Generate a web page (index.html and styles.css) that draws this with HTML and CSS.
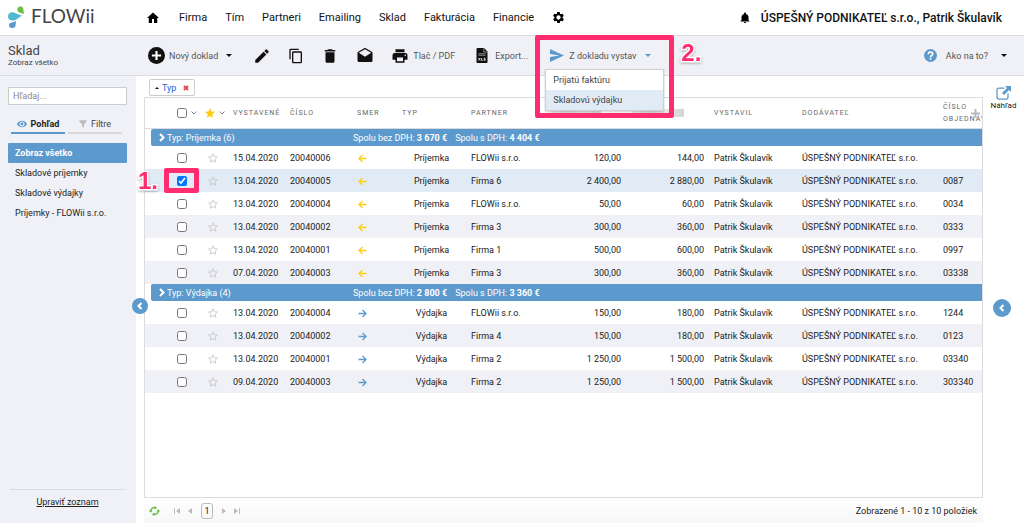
FILE: index.html
```html
<!DOCTYPE html>
<html lang="sk">
    <head>
        <meta charset="UTF-8">
        <meta name="viewport" content="width=device-width, initial-scale=1.0">
        <title>FLOWii - Sklad</title>
        <link rel="stylesheet" href="styles.css">
    </head>
    <body>
        <header class="topbar">
            <a href="#" class="logo">
                <svg width="18" height="23" viewBox="0 0 18 23">
                    <path fill="#6cbf45" d="M9.500 2.500C11 0 14 0 15 2c.7 1.500.5 4 1 6-2-1-4.500-1-6-2.500-.8-.8-1-2-.5-3z"/>
                    <path fill="#4db8cf" d="M0 10.500C0 7.500 2.500 6 5 6.300c3 .4 5.500 3.200 9.500 3.400-4 1.300-5.500 4.700-9.500 4.800-3 .1-5-1.500-5-4z"/>
                    <path fill="#5c9acd" d="M8 15c-.5 2 .2 4.500-1 6-1.300 1.500-4.500 1.500-5.700-.3C.2 18.500 1.500 17 3.500 16.500 5.200 16.100 6.500 16 8 15z"/>
                </svg>
                <span>FLOWii</span>
            </a>
            <nav class="menu">
                <a href="#" aria-label="Domov"><svg width="12" height="12" viewBox="0 0 24 24"><path d="M10 22v-8h4v8h6.500V12H24L12 1 0 12h3.500v10z"/></svg></a>
                <a href="#">Firma</a>
                <a href="#">Tím</a>
                <a href="#">Partneri</a>
                <a href="#">Emailing</a>
                <a href="#">Sklad</a>
                <a href="#">Fakturácia</a>
                <a href="#">Financie</a>
                <a href="#" aria-label="Nastavenia"><svg width="13" height="13" viewBox="0 0 24 24"><path d="M19.400 13c0-.3.100-.6.100-1s0-.7-.1-1l2.100-1.600c.2-.2.3-.4.1-.7l-2-3.400c-.1-.3-.4-.3-.6-.2l-2.500 1c-.5-.4-1.100-.7-1.700-1l-.4-2.600c0-.3-.2-.5-.5-.5h-4c-.2 0-.4.2-.5.400l-.4 2.700c-.6.200-1.100.6-1.700 1l-2.500-1c-.2-.1-.5 0-.6.200l-2 3.400c-.1.300-.1.500.1.700L4.600 11c0 .3-.1.600-.1 1s0 .7.100 1l-2.100 1.600c-.2.200-.3.400-.1.700l2 3.400c.1.300.4.300.6.200l2.500-1c.5.400 1.100.7 1.700 1l.4 2.600c0 .3.200.5.500.5h4c.3 0 .5-.2.500-.5l.4-2.600c.6-.3 1.100-.6 1.700-1l2.500 1c.2.100.5 0 .6-.2l2-3.400c.1-.3.100-.5-.1-.7zM12 16a4 4 0 1 1 0-8 4 4 0 0 1 0 8z"/></svg></a>
            </nav>
            <div class="account">
                <svg width="12" height="12" viewBox="0 0 24 24"><path d="M12 22c1.300 0 2.400-.9 2.400-2H9.600c0 1.100 1.100 2 2.400 2zm7-6v-5.500c0-3.200-2-5.700-5-6.500V3a2 2 0 0 0-4 0v1c-3 .8-5 3.300-5 6.500V16l-2 2.500V19h18v-.5z"/></svg>
                <strong>ÚSPEŠNÝ PODNIKATEĽ s.r.o., Patrik Škulavík</strong>
            </div>
        </header>

        <div class="toolbar">
            <div class="page-title">
                <h1>Sklad</h1>
                <p>Zobraz všetko</p>
            </div>
            <button type="button" class="tool tool-new">
                <svg width="17" height="17" viewBox="0 0 24 24"><circle cx="12" cy="12" r="12"/><path fill="#fff" d="M10.500 5.500h3v5h5v3h-5v5h-3v-5h-5v-3h5z"/></svg>
                Nový doklad <span class="caret"></span>
            </button>
            <button type="button" class="tool" aria-label="Upraviť"><svg width="18" height="18" viewBox="0 0 24 24"><path d="M3 17.200V21h3.800L17.800 9.900l-3.700-3.700zM20.700 7c.4-.4.4-1 0-1.400l-2.300-2.300c-.4-.4-1-.4-1.400 0l-1.900 1.900 3.700 3.700z"/></svg></button>
            <button type="button" class="tool" aria-label="Kopírovať"><svg width="16" height="16" viewBox="0 0 24 24"><path d="M16 1H4a2 2 0 0 0-2 2v14h2V3h12zm3 4H8a2 2 0 0 0-2 2v14c0 1.100.9 2 2 2h11a2 2 0 0 0 2-2V7a2 2 0 0 0-2-2zm0 16H8V7h11z"/></svg></button>
            <button type="button" class="tool" aria-label="Vymazať"><svg width="18" height="18" viewBox="0 0 24 24"><path d="M6 19c0 1.100.9 2 2 2h8a2 2 0 0 0 2-2V7H6zM19 4h-3.500l-1-1h-5l-1 1H5v2h14z"/></svg></button>
            <button type="button" class="tool" aria-label="Odoslať e-mail"><svg width="18" height="18" viewBox="0 0 24 24"><path d="M22 8c0-.7-.4-1.300-.9-1.700L12 1 2.900 6.300C2.400 6.700 2 7.300 2 8v10c0 1.100.9 2 2 2h16a2 2 0 0 0 2-2zm-10 5L3.700 7.800 12 3l8.300 4.800z"/></svg></button>
            <button type="button" class="tool">
                <svg width="18" height="18" viewBox="0 0 24 24"><path d="M19 8H5a3 3 0 0 0-3 3v6h4v4h12v-4h4v-6a3 3 0 0 0-3-3zm-3 11H8v-5h8zm3-7a1 1 0 1 1 0-2 1 1 0 0 1 0 2zM18 3H6v4h12z"/></svg>
                Tlač / PDF
            </button>
            <button type="button" class="tool tool-export">
                <svg width="12" height="15" viewBox="0 0 24 30"><path d="M3 0h13l7 7v21a2 2 0 0 1-2 2H3a2 2 0 0 1-2-2V2a2 2 0 0 1 2-2z"/><path fill="none" stroke="#fff" d="M15.500 1v7H23M5 11.500h14M5 14.500h14"/><path fill="none" stroke="#fff" stroke-width="1.500" d="m5 20 3.500 5M8.500 20 5 25M11 20v4.500h3M19 20.500h-3v2h2.500v2h-3"/></svg>
                Export...
            </button>
            <div class="dropdown">
                <button type="button" class="tool">
                    <svg width="14" height="13" viewBox="0 0 24 22"><path fill="#5c9acd" d="M0 22 24 11 0 0v8.500L16 11 0 13.500z"/></svg>
                    Z dokladu vystav <span class="caret caret-blue"></span>
                </button>
                <div class="dropdown-menu">
                    <a href="#">Prijatú faktúru</a>
                    <a href="#" class="active">Skladovú výdajku</a>
                </div>
                <div class="step-frame"></div>
                <span class="step">2.</span>
            </div>
            <button type="button" class="tool tool-help">
                <svg width="13" height="13" viewBox="0 0 24 24"><circle cx="12" cy="12" r="12" fill="#5c9acd"/><path fill="none" stroke="#fff" stroke-width="3" d="M8 9.500C8 7 9.500 5.500 12 5.500s4 1.500 4 3.500c0 3-4 3-4 6"/><circle cx="12" cy="18" r="1.800" fill="#fff"/></svg>
                <span>Ako na to?</span> <span class="caret"></span>
            </button>
        </div>

        <div class="page">
            <aside class="sidebar">
                <input type="text" class="search" placeholder="Hľadaj..." aria-label="Hľadaj">
                <div class="tabs">
                    <a href="#" class="tab active"><svg width="10" height="8" viewBox="0 0 24 18"><path fill="#5c9acd" fill-rule="evenodd" d="M12 1C6 1 2 5 0 9c2 4 6 8 12 8s10-4 12-8c-2-4-6-8-12-8zm0 14a6 6 0 1 1 0-12 6 6 0 0 1 0 12zm0-2.500a3.500 3.500 0 1 0 0-7 3.500 3.500 0 0 0 0 7z"/></svg>Pohľad</a>
                    <a href="#" class="tab"><svg width="8" height="8" viewBox="0 0 24 24"><path fill="#bbb" d="M1 1h22v3l-8 9v11l-6-5v-6L1 4z"/></svg>Filtre</a>
                </div>
                <nav class="views">
                    <a href="#" class="active">Zobraz všetko</a>
                    <a href="#">Skladové príjemky</a>
                    <a href="#">Skladové výdajky</a>
                    <a href="#">Príjemky - FLOWii s.r.o.</a>
                </nav>
                <div class="sidebar-bottom"><a href="#">Upraviť zoznam</a></div>
                <button type="button" class="toggle" aria-label="Skryť panel"><svg width="8" height="8" viewBox="0 0 8 8"><path d="M5.500 1 2.500 4l3 3"/></svg></button>
            </aside>

            <main class="content">
                <div class="grouping">
                    <span class="chip"><span class="sort"></span>Typ
                        <button type="button" aria-label="Zrušiť"><svg width="6" height="6" viewBox="0 0 6 6"><path stroke="#e8455a" stroke-width="2" d="m1 1 4 4M5 1 1 5"/></svg></button>
                    </span>
                </div>
                <div class="grid">
                    <table id="documents">
                        <colgroup>
                            <col class="c-check"><col class="c-star"><col class="c-date"><col class="c-number">
                            <col class="c-dir"><col class="c-type"><col><col class="c-sum">
                            <col class="c-total"><col class="c-user"><col class="c-supplier"><col class="c-order">
                        </colgroup>
                        <thead>
                            <tr>
                                <th class="check"><input type="checkbox" aria-label="Označiť všetko"><svg class="chevron" width="6" height="4" viewBox="0 0 6 4"><path d="m.5.500 2.500 2.500L5.500.500"/></svg></th>
                                <th class="fav"><svg width="10" height="10" viewBox="0 0 24 24"><path fill="#fdcc0d" d="m12 0 3.500 8.500 8.500.700-6.500 5.800 2 8.500-7.500-4.500-7.500 4.500 2-8.500L0 9.200l8.500-.7z"/></svg><svg class="chevron" width="6" height="4" viewBox="0 0 6 4"><path d="m.5.500 2.500 2.500L5.500.500"/></svg></th>
                                <th>Vystavené</th>
                                <th>Číslo</th>
                                <th>Smer</th>
                                <th>Typ</th>
                                <th>Partner</th>
                                <th><span class="masked"></span></th>
                                <th><span class="masked"></span></th>
                                <th>Vystavil</th>
                                <th>Dodávateľ</th>
                                <th class="order">Číslo objednávky<svg width="9" height="9" viewBox="0 0 9 9"><path stroke="#bbb" stroke-width="2" d="M4.500 0v9M0 4.500h9"/></svg></th>
                            </tr>
                        </thead>
                    </table>
                </div>
                <footer class="pager">
                    <button type="button" aria-label="Obnoviť"><svg width="11" height="10" viewBox="0 0 22 20"><path fill="none" stroke="#5cb531" stroke-width="2.500" d="M3.500 10c0-4.500 3.500-7 8-6.500M18.500 10c0 4.500-3.500 7-8 6.500"/><path fill="#5cb531" d="M11 0l5 3.500-5 3.500zM11 13l-5 3.500 5 3.500zM0 9h7l-3.500 4.500zM22 11h-7l3.500-4.500z"/></svg></button>
                    <button type="button" aria-label="Prvá"><svg width="6" height="6" viewBox="0 0 6 6"><path fill="#bbb" d="M0 0h1v6H0zM6 0v6L2 3z"/></svg></button>
                    <button type="button" aria-label="Späť"><svg width="4" height="6" viewBox="0 0 4 6"><path fill="#bbb" d="M4 0v6L0 3z"/></svg></button>
                    <button type="button" class="current">1</button>
                    <button type="button" aria-label="Ďalej"><svg width="4" height="6" viewBox="0 0 4 6"><path fill="#bbb" d="M0 0v6l4-3z"/></svg></button>
                    <button type="button" aria-label="Posledná"><svg width="6" height="6" viewBox="0 0 6 6"><path fill="#bbb" d="M5 0h1v6H5zM0 0v6l4-3z"/></svg></button>
                    <span class="count">Zobrazené 1 - 10 z 10 položiek</span>
                </footer>
            </main>

            <aside class="preview">
                <a href="#">
                    <svg width="15" height="14" viewBox="0 0 30 28"><path fill="none" stroke="#5c9acd" stroke-width="2.500" d="M17 4H6a4 4 0 0 0-4 4v14a4 4 0 0 0 4 4h14a4 4 0 0 0 4-4v-7"/><path fill="#5c9acd" d="M18 0h12v12l-4-4-10 10-4-4L22 4z"/></svg>
                    Náhľad
                </a>
                <button type="button" class="toggle" aria-label="Zobraziť náhľad"><svg width="8" height="8" viewBox="0 0 8 8"><path d="M5.500 1 2.500 4l3 3"/></svg></button>
            </aside>
        </div>

        <script>
            const groups = [
                {
                    name: 'Príjemka', net: '3 670 €', gross: '4 404 €', dir: 'in',
                    items: [
                        ['15.04.2020', '20040006', 'FLOWii s.r.o.', '120,00', '144,00', ''],
                        ['13.04.2020', '20040005', 'Firma 6', '2 400,00', '2 880,00', '0087', true],
                        ['13.04.2020', '20040004', 'FLOWii s.r.o.', '50,00', '60,00', '0034'],
                        ['13.04.2020', '20040002', 'Firma 3', '300,00', '360,00', '0333'],
                        ['13.04.2020', '20040001', 'Firma 1', '500,00', '600,00', '0997'],
                        ['07.04.2020', '20040003', 'Firma 3', '300,00', '360,00', '03338']
                    ]
                },
                {
                    name: 'Výdajka', net: '2 800 €', gross: '3 360 €', dir: 'out',
                    items: [
                        ['13.04.2020', '20040004', 'FLOWii s.r.o.', '150,00', '180,00', '1244'],
                        ['13.04.2020', '20040002', 'Firma 4', '150,00', '180,00', '0123'],
                        ['13.04.2020', '20040001', 'Firma 2', '1 250,00', '1 500,00', '03340'],
                        ['09.04.2020', '20040003', 'Firma 2', '1 250,00', '1 500,00', '303340']
                    ]
                }
            ];

            const star = '<svg width="10" height="10" viewBox="0 0 24 24"><path fill="none" stroke="#c4c4c4" stroke-width="2" d="m12 2 3 7 7.500.700-5.500 5 1.500 7.300-6.500-4-6.500 4L7 14.700l-5.500-5L9 9z"/></svg>';
            const arrows = {
                in: '<svg width="10" height="9" viewBox="0 0 10 9"><path fill="none" stroke="#fdd017" stroke-width="1.300" d="M9.500 4.500H2M5.500 1 2 4.500 5.500 8"/></svg>',
                out: '<svg width="10" height="9" viewBox="0 0 10 9"><path fill="none" stroke="#5c9acd" stroke-width="1.300" d="M1.500 4.500H9M5.500 1 9 4.500 5.500 8"/></svg>'
            };

            const table = document.getElementById('documents');
            groups.forEach(group => {
                let html = `<tr class="group"><td colspan="12"><div>
                    <svg width="6" height="9" viewBox="0 0 6 9"><path fill="none" stroke="#fff" stroke-width="2" d="m1 1 3.500 3.500L1 8"/></svg>
                    <span class="group-name">Typ: ${group.name} (${group.items.length})</span>
                    <span>Spolu bez DPH: <b>${group.net}</b></span>
                    <span>Spolu s DPH: <b>${group.gross}</b></span>
                </div></td></tr>`;
                group.items.forEach(([date, number, partner, sum, total, order, checked]) => {
                    html += `<tr class="${checked ? 'selected' : ''}">
                        <td class="check"><input type="checkbox" aria-label="${number}" ${checked ? 'checked' : ''}>${checked ? '<div class="step-frame"></div><span class="step">1.</span>' : ''}</td>
                        <td class="fav">${star}</td>
                        <td>${date}</td>
                        <td>${number}</td>
                        <td class="dir">${arrows[group.dir]}</td>
                        <td class="type">${group.name}</td>
                        <td>${partner}</td>
                        <td class="money">${sum}</td>
                        <td class="money">${total}</td>
                        <td>Patrik Škulavík</td>
                        <td>ÚSPEŠNÝ PODNIKATEĽ s.r.o.</td>
                        <td>${order}</td>
                    </tr>`;
                });
                table.createTBody().innerHTML = html;
            });
        </script>
    </body>
</html>
```
FILE: styles.css
```css
:root {
    --blue: #5c9acd;
    --light-blue: #e1ebf5;
    --panel: #f0f1f6;
    --line: #dcdce0;
    --pink: #ff2d6f;
}

* {
    box-sizing: border-box;
}

body {
    display: flex;
    flex-direction: column;
    min-height: 100vh;
    margin: 0;
    background: #fff;
    color: #222;
    font-family: Roboto, "Liberation Sans", sans-serif;
    font-size: 9px;
    line-height: 12px;
}

a {
    color: inherit;
    text-decoration: none;
}

button {
    padding: 0;
    border: none;
    background: none;
    color: inherit;
    font: inherit;
}

svg {
    display: block;
    flex: none;
}

/* top bar */
.topbar {
    display: flex;
    align-items: center;
    height: 36px;
    padding-right: 22px;
    border-bottom: 1px solid var(--line);
    color: #111;
}

.logo {
    display: flex;
    align-items: center;
    gap: 5px;
    width: 147px;
    padding-left: 8px;
    color: #444;
    font-family: Lato, sans-serif;
    font-size: 19px;
    line-height: 22px;
}

.logo span {
    margin-top: -4px;
}

.menu {
    display: flex;
    align-items: center;
    gap: 18px;
    font-size: 11px;
}

.menu a:first-child {
    margin-right: 2px;
}

.account {
    display: flex;
    align-items: center;
    gap: 10px;
    margin-left: auto;
    font-size: 12px;
}

.account strong {
    font-weight: 500;
}

/* toolbar */
.toolbar {
    display: flex;
    align-items: center;
    height: 40px;
    padding-right: 17px;
    border-bottom: 1px solid var(--line);
    background: var(--panel);
}

.page-title {
    width: 148px;
    padding-left: 8px;
    color: #444;
}

.page-title h1 {
    margin: 0;
    font-size: 13px;
    font-weight: normal;
    line-height: 14px;
}

.page-title p {
    margin: 0;
    font-size: 8px;
    line-height: 10px;
}

.tool {
    display: flex;
    align-items: center;
    gap: 4px;
    margin-right: 17px;
    color: #555;
    white-space: nowrap;
}

.tool svg {
    fill: #111;
}

.tool-new {
    margin-right: 21px;
}

.tool-export {
    gap: 7px;
    margin-left: 4px;
    margin-right: 22px;
}

.tool-help {
    gap: 9px;
    margin: 0 0 0 auto;
}

.caret {
    margin-left: 4px;
    border: 3px solid transparent;
    border-top-color: #111;
    border-bottom: none;
}

.caret-blue {
    border-top-color: var(--blue);
}

.dropdown {
    position: relative;
}

.dropdown .tool {
    margin: 0;
    gap: 5px;
}

.dropdown-menu {
    position: absolute;
    z-index: 2;
    top: 20px;
    left: -5px;
    width: 119px;
    border: 1px solid #d0d0d0;
    background: #fff;
    color: #444;
    box-shadow: 0 1px 2px rgba(0, 0, 0, .2);
}

.dropdown-menu a {
    display: block;
    padding: 4px 7px;
}

.dropdown-menu .active {
    background: var(--light-blue);
}

/* tutorial marks */
.step-frame {
    position: absolute;
    z-index: 3;
    border: 5px solid var(--pink);
    border-radius: 2px;
    pointer-events: none;
}

.step {
    position: absolute;
    z-index: 3;
    color: var(--pink);
    font: bold 24px/24px "Liberation Sans", sans-serif;
    -webkit-text-stroke: 3px #fff;
    paint-order: stroke fill;
    filter: drop-shadow(0 1px 1px rgba(0, 0, 0, .3));
}

.dropdown .step-frame {
    top: -14px;
    left: -15px;
    width: 139px;
    height: 83px;
}

.dropdown .step {
    top: -8px;
    left: 131px;
}

.check .step-frame {
    top: -1px;
    left: 19px;
    width: 35px;
    height: 25px;
}

.check .step {
    top: 0;
    left: -7px;
}

/* layout */
.page {
    display: flex;
    flex: 1;
}

.sidebar {
    position: relative;
    display: flex;
    flex-direction: column;
    width: 136px;
    padding: 11px 9px 15px 8px;
    background: var(--panel);
}

.search {
    width: 100%;
    height: 18px;
    padding: 0 4px;
    border: 1px solid #ccc;
    background: #fff;
    font: inherit;
}

.search::placeholder {
    color: #888;
}

.tabs {
    display: flex;
    gap: 3px;
    margin: 13px 5px 9px 3px;
}

.tab {
    display: flex;
    flex: 1;
    align-items: center;
    justify-content: center;
    gap: 4px;
    padding-bottom: 2px;
    border-bottom: 2px solid #d8d8d8;
    color: #444;
}

.tab.active {
    border-color: var(--blue);
    color: #222;
    font-weight: bold;
}

.views a {
    display: block;
    padding: 4px 7px;
    white-space: nowrap;
}

.views .active {
    border-radius: 1px;
    background: var(--blue);
    color: #fff;
    font-weight: bold;
}

.sidebar-bottom {
    margin: auto 2px 0;
    padding-top: 6px;
    border-top: 1px solid var(--line);
    text-align: center;
    text-decoration: underline;
}

.toggle {
    position: absolute;
    z-index: 2;
    top: 222px;
    display: grid;
    place-items: center;
    width: 16px;
    height: 16px;
    border-radius: 50%;
    background: var(--blue);
}

.toggle path {
    fill: none;
    stroke: #fff;
    stroke-width: 2;
}

.sidebar .toggle {
    right: -12px;
}

.content {
    display: flex;
    flex: 1;
    flex-direction: column;
    min-width: 0;
    padding-left: 8px;
}

.grouping {
    padding: 3px 5px 1px;
    border-bottom: 1px solid var(--line);
}

.chip {
    display: inline-flex;
    align-items: center;
    height: 17px;
    padding: 0 5px;
    border: 1px solid #ccc;
    border-radius: 2px;
    color: #1a62d6;
    vertical-align: top;
}

.chip button {
    margin-left: 7px;
}

.sort {
    margin-right: 3px;
    border: 2px solid transparent;
    border-top: none;
    border-bottom-color: #111;
}

/* grid */
.grid {
    position: relative;
    flex: 1;
    border: 1px solid var(--line);
    border-top: none;
}

table {
    width: 100%;
    border-spacing: 0;
    table-layout: fixed;
}

.c-check { width: 52px; }
.c-star { width: 31px; }
.c-date { width: 57px; }
.c-number { width: 67px; }
.c-dir { width: 45px; }
.c-type { width: 69px; }
.c-sum { width: 81px; }
.c-total { width: 83px; }
.c-user { width: 88px; }
.c-supplier { width: 141px; }
.c-order { width: 44px; }

th {
    height: 31px;
    padding: 0 5px;
    border-bottom: 1px solid var(--line);
    color: #666;
    font-size: 7px;
    font-weight: normal;
    letter-spacing: 1px;
    text-align: left;
    text-transform: uppercase;
}

td {
    height: 23px;
    padding: 0 5px;
    white-space: nowrap;
}

tbody tr:nth-child(odd) td {
    background: var(--panel);
}

tbody tr.selected td {
    background: var(--light-blue);
}

td.check,
th.check {
    position: relative;
    padding: 0 0 0 32px;
    white-space: nowrap;
}

th .chevron {
    display: inline-block;
    margin-left: 4px;
    fill: none;
    stroke: #888;
    vertical-align: middle;
}

input[type="checkbox"] {
    width: 10px;
    height: 10px;
    margin: 0;
    vertical-align: middle;
}

.fav {
    padding-left: 11px;
}

th.fav {
    padding: 0 0 0 8px;
    white-space: nowrap;
}

th.fav svg {
    display: inline-block;
    vertical-align: middle;
}

.dir svg {
    margin-top: 2px;
}

.type {
    text-align: center;
}

.money {
    text-align: right;
}

.masked {
    display: block;
    height: 8px;
    margin-right: 20px;
    background: linear-gradient(90deg, #eee, #d8d8d8, #e6e6e6, #d4d4d4);
}

th.order {
    position: relative;
    overflow: hidden;
    line-height: 12px;
}

.order svg {
    position: absolute;
    top: 11px;
    right: 2px;
}

tbody tr.group td {
    height: 17px;
    padding: 0 0 0 6px;
    background: #fff;
}

.group div {
    display: flex;
    align-items: center;
    gap: 8px;
    height: 17px;
    padding-left: 8px;
    border-radius: 2px 0 0 2px;
    background: var(--blue);
    color: #fff;
}

.group-name {
    width: 178px;
    margin-left: -6px;
}

/* pager */
.pager {
    display: flex;
    align-items: center;
    gap: 8px;
    height: 25px;
    padding: 0 6px 0 5px;
    background: linear-gradient(#fff, #f7f7f7);
}

.pager button:first-child {
    margin-right: 6px;
}

.pager .current {
    width: 12px;
    height: 16px;
    margin: 0 1px;
    border: 1px solid #bbb;
    border-radius: 3px;
}

.count {
    margin-left: auto;
}

.preview {
    position: relative;
    width: 41px;
    padding-top: 10px;
    font-size: 8px;
    text-align: center;
}

.preview svg {
    margin: 0 auto;
}

.preview .toggle {
    top: 223px;
    left: 10px;
    width: 18px;
    height: 18px;
}
```
